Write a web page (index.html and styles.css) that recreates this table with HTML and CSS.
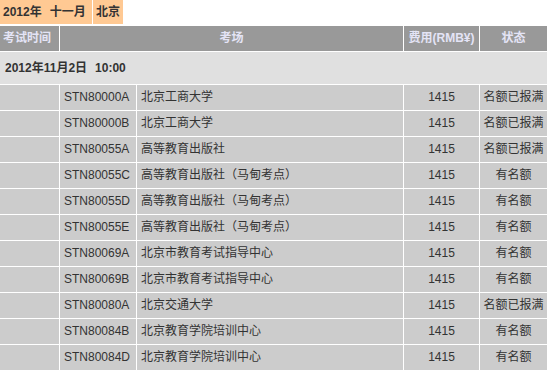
FILE: index.html
```html
<!DOCTYPE html>
<html lang="zh-CN">
<head>
<meta charset="utf-8">
<title>考试安排</title>
<link rel="stylesheet" href="styles.css">
</head>
<body>
<div class="tabs">
  <div class="tab tab-date"><span>2012年</span><span>十一月</span></div>
  <div class="tab tab-city">北京</div>
</div>
<div class="sched">
  <div class="row head">
    <div class="c">考试时间</div>
    <div class="c span2 center">考场</div>
    <div class="c center">费用(RMB¥)</div>
    <div class="c center">状态</div>
  </div>
  <div class="row date">
    <div class="c full"><span>2012年11月2日</span><span>10:00</span></div>
  </div>
  <div class="row"><div class="c"></div><div class="c">STN80000A</div><div class="c">北京工商大学</div><div class="c center">1415</div><div class="c center">名额已报满</div></div>
  <div class="row"><div class="c"></div><div class="c">STN80000B</div><div class="c">北京工商大学</div><div class="c center">1415</div><div class="c center">名额已报满</div></div>
  <div class="row"><div class="c"></div><div class="c">STN80055A</div><div class="c">高等教育出版社</div><div class="c center">1415</div><div class="c center">名额已报满</div></div>
  <div class="row"><div class="c"></div><div class="c">STN80055C</div><div class="c">高等教育出版社（马甸考点）</div><div class="c center">1415</div><div class="c center">有名额</div></div>
  <div class="row"><div class="c"></div><div class="c">STN80055D</div><div class="c">高等教育出版社（马甸考点）</div><div class="c center">1415</div><div class="c center">有名额</div></div>
  <div class="row"><div class="c"></div><div class="c">STN80055E</div><div class="c">高等教育出版社（马甸考点）</div><div class="c center">1415</div><div class="c center">有名额</div></div>
  <div class="row"><div class="c"></div><div class="c">STN80069A</div><div class="c">北京市教育考试指导中心</div><div class="c center">1415</div><div class="c center">有名额</div></div>
  <div class="row"><div class="c"></div><div class="c">STN80069B</div><div class="c">北京市教育考试指导中心</div><div class="c center">1415</div><div class="c center">有名额</div></div>
  <div class="row"><div class="c"></div><div class="c">STN80080A</div><div class="c">北京交通大学</div><div class="c center">1415</div><div class="c center">名额已报满</div></div>
  <div class="row"><div class="c"></div><div class="c">STN80084B</div><div class="c">北京教育学院培训中心</div><div class="c center">1415</div><div class="c center">有名额</div></div>
  <div class="row"><div class="c"></div><div class="c">STN80084D</div><div class="c">北京教育学院培训中心</div><div class="c center">1415</div><div class="c center">有名额</div></div>
</div>
</body>
</html>
```

FILE: styles.css
```css
html, body {
  margin: 0;
  padding: 0;
  background: #ffffff;
}
body {
  font-family: "Liberation Sans", "Noto Sans CJK SC", sans-serif;
  font-size: 12px;
  color: #333333;
  overflow: hidden;
}
.tabs {
  display: flex;
  gap: 1px;
  height: 24px;
  margin-bottom: 2px;
}
.tab {
  background: #ffc993;
  font-weight: bold;
  font-size: 12px;
  line-height: 24px;
  color: #333333;
  display: flex;
  gap: 8px;
  padding: 0 3px;
}
.tab-date {
  width: 86px;
}
.tab-city {
  width: 24px;
}
.sched {
  display: flex;
  flex-direction: column;
  gap: 1px;
}
.row {
  display: grid;
  grid-template-columns: 59px 76px 266px 75px 67px;
  column-gap: 1px;
  height: 25px;
}
.c {
  background: #cccccc;
  line-height: 25px;
  padding-left: 4px;
  white-space: nowrap;
  overflow: hidden;
}
.center {
  text-align: center;
  padding-left: 0;
}
.span2 {
  grid-column: span 2;
}
.head .c {
  background: #999999;
  color: #e4e4f6;
  font-weight: bold;
}
.head .c:first-child {
  padding-left: 3px;
}
.date {
  height: 32px;
}
.date .c {
  background: #e0e0e0;
  line-height: 32px;
  font-weight: bold;
  padding-left: 5px;
  display: flex;
  gap: 8px;
}
.full {
  grid-column: 1 / -1;
}
```
